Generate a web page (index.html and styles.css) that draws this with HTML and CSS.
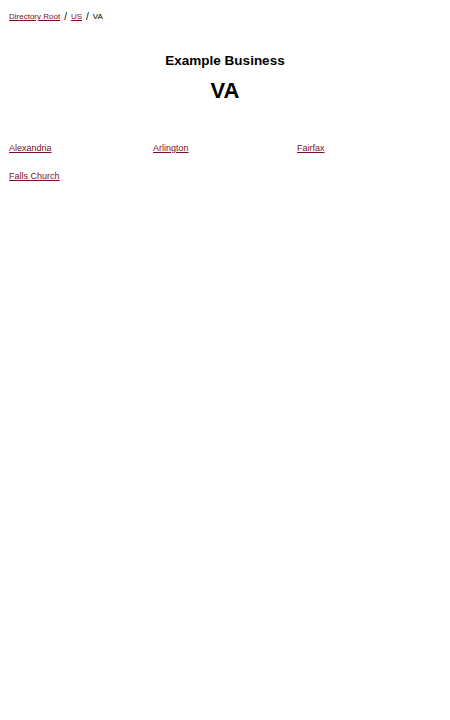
FILE: index.html
```html
<!DOCTYPE html>
<html>
<head>
<meta charset="utf-8">
<link rel="stylesheet" href="styles.css">
</head>
<body>
<nav class="crumbs">
  <a href="#">Directory Root</a><span class="sep">/</span><a href="#">US</a><span class="sep">/</span><span class="current">VA</span>
</nav>
<header class="head">
  <h2 class="biz">Example Business</h2>
  <h1 class="state">VA</h1>
</header>
<ul class="cities">
  <li><a href="#">Alexandria</a></li>
  <li><a href="#">Arlington</a></li>
  <li><a href="#">Fairfax</a></li>
  <li><a href="#">Falls Church</a></li>
</ul>
</body>
</html>
```
FILE: styles.css
```css
html, body { margin: 0; padding: 0; background: #fff; }
body {
  font-family: "Liberation Sans", Arial, sans-serif;
  color: #000;
  padding: 0 9px;
}
a { color: #7b1026; text-decoration: underline; }
.crumbs {
  font-size: 8px;
  padding-top: 12px;
  line-height: 10px;
  display: flex;
  align-items: center;
}
.sep { margin: 0 4px; font-size: 10px; }
.current { font-size: 8px; }
.head { text-align: center; margin-top: 31px; }
.biz { font-size: 13.5px; font-weight: bold; margin: 0; line-height: 16px; }
.state { font-size: 22px; font-weight: bold; margin: 10px 0 0; line-height: 24px; }
.cities {
  list-style: none;
  margin: 40px 0 0;
  padding: 0;
  display: grid;
  grid-template-columns: repeat(3, 1fr);
  row-gap: 17px;
  font-size: 9px;
  line-height: 11px;
}
```
